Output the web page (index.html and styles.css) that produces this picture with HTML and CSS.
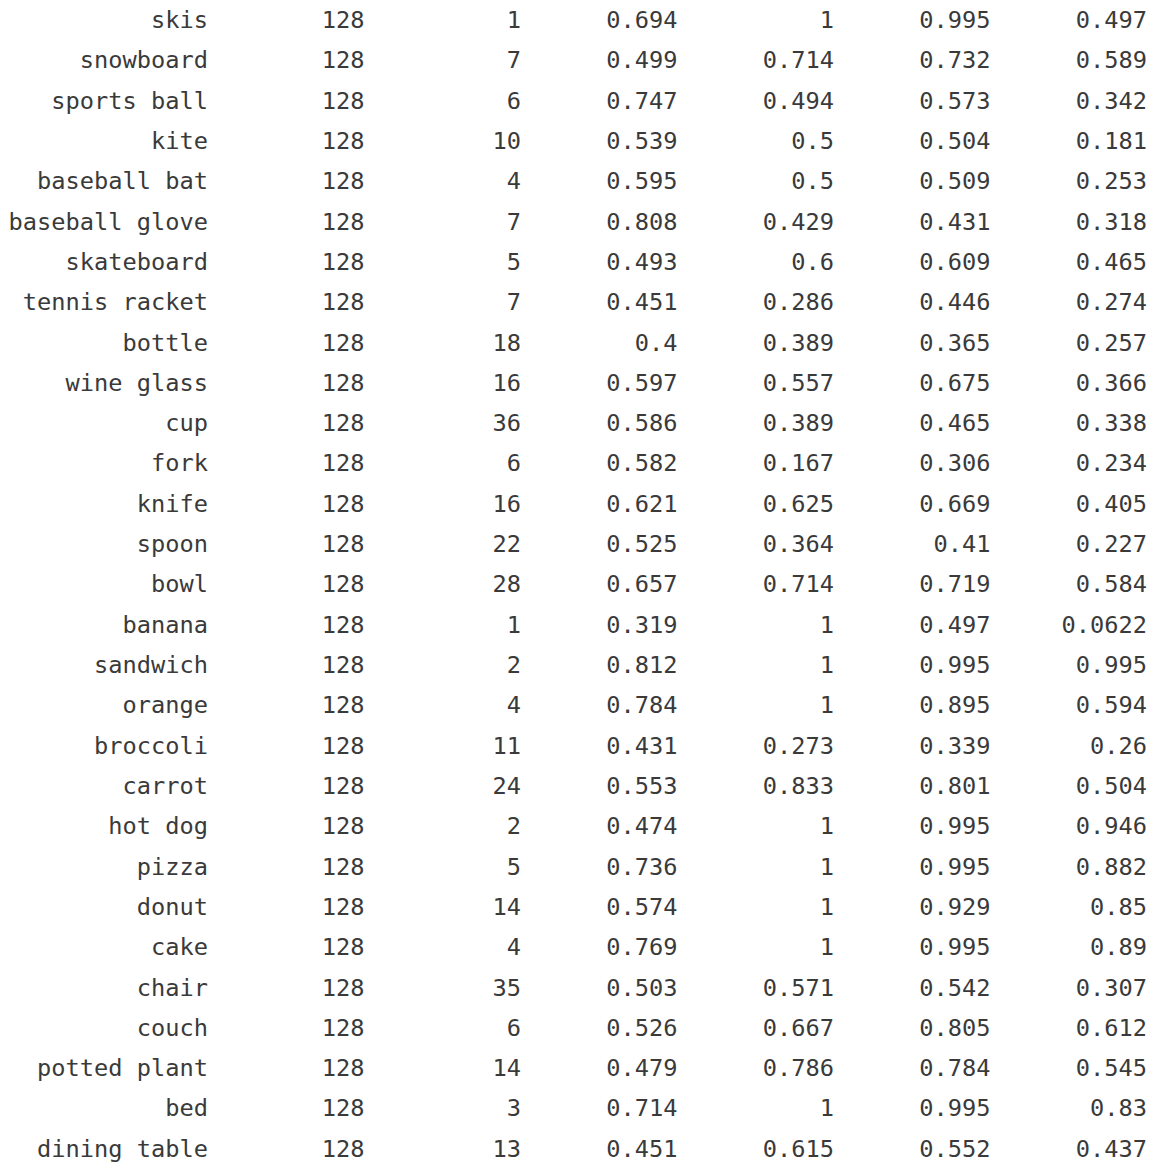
FILE: index.html
```html
<!DOCTYPE html>
<html>
<head>
<meta charset="utf-8">
<link rel="stylesheet" href="styles.css">
</head>
<body>
<div class="table">
<div class="row"><span>skis</span><span>128</span><span>1</span><span>0.694</span><span>1</span><span>0.995</span><span>0.497</span></div>
<div class="row"><span>snowboard</span><span>128</span><span>7</span><span>0.499</span><span>0.714</span><span>0.732</span><span>0.589</span></div>
<div class="row"><span>sports ball</span><span>128</span><span>6</span><span>0.747</span><span>0.494</span><span>0.573</span><span>0.342</span></div>
<div class="row"><span>kite</span><span>128</span><span>10</span><span>0.539</span><span>0.5</span><span>0.504</span><span>0.181</span></div>
<div class="row"><span>baseball bat</span><span>128</span><span>4</span><span>0.595</span><span>0.5</span><span>0.509</span><span>0.253</span></div>
<div class="row"><span>baseball glove</span><span>128</span><span>7</span><span>0.808</span><span>0.429</span><span>0.431</span><span>0.318</span></div>
<div class="row"><span>skateboard</span><span>128</span><span>5</span><span>0.493</span><span>0.6</span><span>0.609</span><span>0.465</span></div>
<div class="row"><span>tennis racket</span><span>128</span><span>7</span><span>0.451</span><span>0.286</span><span>0.446</span><span>0.274</span></div>
<div class="row"><span>bottle</span><span>128</span><span>18</span><span>0.4</span><span>0.389</span><span>0.365</span><span>0.257</span></div>
<div class="row"><span>wine glass</span><span>128</span><span>16</span><span>0.597</span><span>0.557</span><span>0.675</span><span>0.366</span></div>
<div class="row"><span>cup</span><span>128</span><span>36</span><span>0.586</span><span>0.389</span><span>0.465</span><span>0.338</span></div>
<div class="row"><span>fork</span><span>128</span><span>6</span><span>0.582</span><span>0.167</span><span>0.306</span><span>0.234</span></div>
<div class="row"><span>knife</span><span>128</span><span>16</span><span>0.621</span><span>0.625</span><span>0.669</span><span>0.405</span></div>
<div class="row"><span>spoon</span><span>128</span><span>22</span><span>0.525</span><span>0.364</span><span>0.41</span><span>0.227</span></div>
<div class="row"><span>bowl</span><span>128</span><span>28</span><span>0.657</span><span>0.714</span><span>0.719</span><span>0.584</span></div>
<div class="row"><span>banana</span><span>128</span><span>1</span><span>0.319</span><span>1</span><span>0.497</span><span>0.0622</span></div>
<div class="row"><span>sandwich</span><span>128</span><span>2</span><span>0.812</span><span>1</span><span>0.995</span><span>0.995</span></div>
<div class="row"><span>orange</span><span>128</span><span>4</span><span>0.784</span><span>1</span><span>0.895</span><span>0.594</span></div>
<div class="row"><span>broccoli</span><span>128</span><span>11</span><span>0.431</span><span>0.273</span><span>0.339</span><span>0.26</span></div>
<div class="row"><span>carrot</span><span>128</span><span>24</span><span>0.553</span><span>0.833</span><span>0.801</span><span>0.504</span></div>
<div class="row"><span>hot dog</span><span>128</span><span>2</span><span>0.474</span><span>1</span><span>0.995</span><span>0.946</span></div>
<div class="row"><span>pizza</span><span>128</span><span>5</span><span>0.736</span><span>1</span><span>0.995</span><span>0.882</span></div>
<div class="row"><span>donut</span><span>128</span><span>14</span><span>0.574</span><span>1</span><span>0.929</span><span>0.85</span></div>
<div class="row"><span>cake</span><span>128</span><span>4</span><span>0.769</span><span>1</span><span>0.995</span><span>0.89</span></div>
<div class="row"><span>chair</span><span>128</span><span>35</span><span>0.503</span><span>0.571</span><span>0.542</span><span>0.307</span></div>
<div class="row"><span>couch</span><span>128</span><span>6</span><span>0.526</span><span>0.667</span><span>0.805</span><span>0.612</span></div>
<div class="row"><span>potted plant</span><span>128</span><span>14</span><span>0.479</span><span>0.786</span><span>0.784</span><span>0.545</span></div>
<div class="row"><span>bed</span><span>128</span><span>3</span><span>0.714</span><span>1</span><span>0.995</span><span>0.83</span></div>
<div class="row"><span>dining table</span><span>128</span><span>13</span><span>0.451</span><span>0.615</span><span>0.552</span><span>0.437</span></div>
</div>
</body>
</html>
```
FILE: styles.css
```css
html, body {
  margin: 0;
  padding: 0;
  background: #ffffff;
}
.table {
  font-family: "DejaVu Sans Mono", "Liberation Mono", monospace;
  font-size: 23.67px;
  line-height: 40.32px;
  color: #3a3a3a;
}
.row {
  display: grid;
  grid-template-columns: 208px repeat(6, 156.5px);
  height: 40.32px;
}
.row span {
  text-align: right;
  white-space: pre;
}
```
